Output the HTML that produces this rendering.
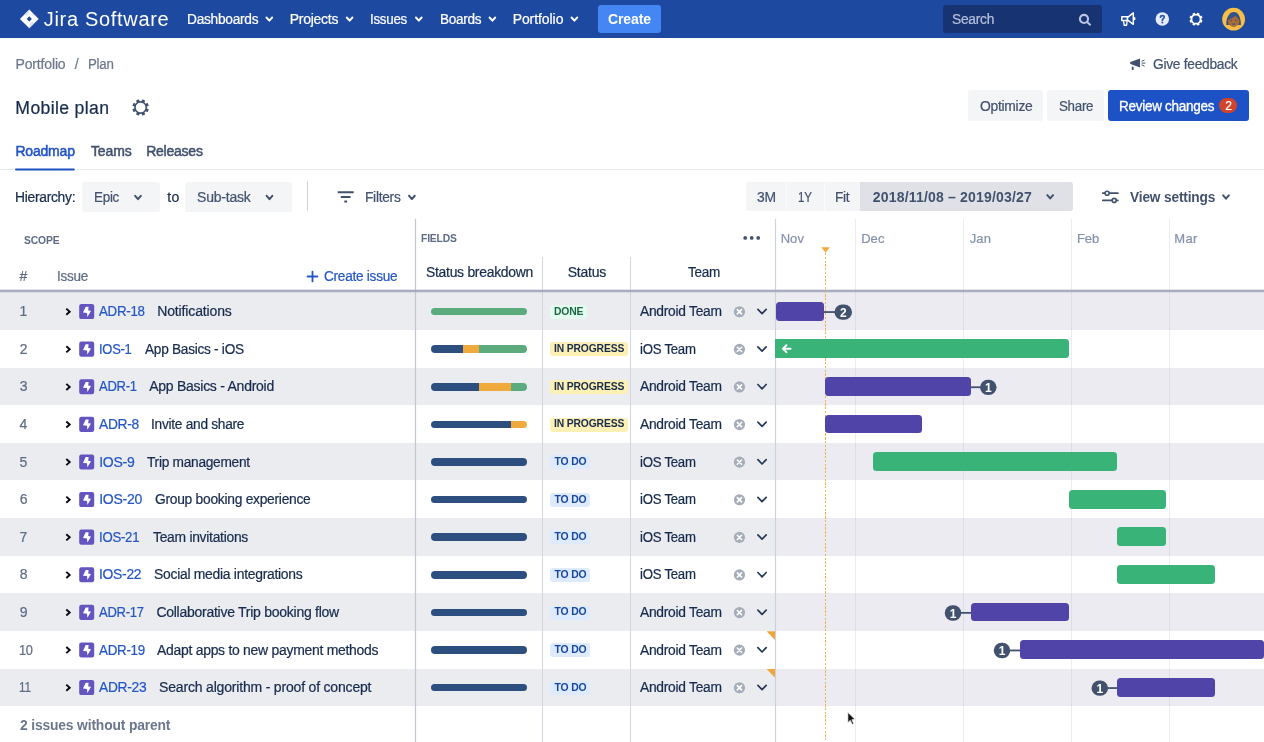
<!DOCTYPE html>
<html>
<head>
<meta charset="utf-8">
<title>Mobile plan - Portfolio for Jira</title>
<style>
*{box-sizing:border-box;margin:0;padding:0}
html,body{width:1264px;height:742px;overflow:hidden;background:#fff}
body{font-family:"Liberation Sans",sans-serif;font-size:14px;color:#172b4d;position:relative}
.b{position:absolute;display:block}
.t{position:absolute;white-space:nowrap;font-family:"Liberation Sans",sans-serif;-webkit-text-stroke:0.22px currentColor}
</style>
</head>
<body>
<div class="b" style="left:0.00px;top:0.00px;width:1264.00px;height:37.60px;background:#1d49a0;"></div>
<svg class="b" style="left:19px;top:9px;" width="22" height="21" viewBox="0 0 22 21"><g transform="translate(0.00 0.00)"><defs><linearGradient id="lg1" x1="0" y1="0" x2="1" y2="1"><stop offset="0" stop-color="#9fb2de"/><stop offset="1" stop-color="#fff"/></linearGradient><linearGradient id="lg2" x1="1" y1="1" x2="0" y2="0"><stop offset="0" stop-color="#9fb2de"/><stop offset="1" stop-color="#fff"/></linearGradient></defs><path d="M10.3 0.5 L19.7 9.9 L10.3 19.3 L0.9 9.9 Z" fill="#fff"/><path d="M5.6 5.2 L10.3 0.5 L10.3 5 L7.7 7.3 Z" fill="url(#lg1)" opacity=".85"/><path d="M15 14.6 L10.3 19.3 L10.3 14.8 L12.9 12.5 Z" fill="url(#lg2)" opacity=".85"/><path d="M10.3 7.3 L12.9 9.9 L10.3 12.5 L7.7 9.9 Z" fill="#1d49a0"/></g></svg>
<svg class="b" style="left:264px;top:15px;" width="11" height="8" viewBox="0 0 11 8"><g transform="translate(0.45 0.50)"><path d="M2 2 L4.85 5.2 L7.7 2" fill="none" stroke="#fff" stroke-width="1.9" stroke-linecap="round" stroke-linejoin="round"/></g></svg>
<svg class="b" style="left:344px;top:15px;" width="11" height="8" viewBox="0 0 11 8"><g transform="translate(0.75 0.50)"><path d="M2 2 L4.85 5.2 L7.7 2" fill="none" stroke="#fff" stroke-width="1.9" stroke-linecap="round" stroke-linejoin="round"/></g></svg>
<svg class="b" style="left:413px;top:15px;" width="11" height="8" viewBox="0 0 11 8"><g transform="translate(0.95 0.50)"><path d="M2 2 L4.85 5.2 L7.7 2" fill="none" stroke="#fff" stroke-width="1.9" stroke-linecap="round" stroke-linejoin="round"/></g></svg>
<svg class="b" style="left:487px;top:15px;" width="11" height="8" viewBox="0 0 11 8"><g transform="translate(0.55 0.50)"><path d="M2 2 L4.85 5.2 L7.7 2" fill="none" stroke="#fff" stroke-width="1.9" stroke-linecap="round" stroke-linejoin="round"/></g></svg>
<svg class="b" style="left:569px;top:15px;" width="11" height="8" viewBox="0 0 11 8"><g transform="translate(0.55 0.50)"><path d="M2 2 L4.85 5.2 L7.7 2" fill="none" stroke="#fff" stroke-width="1.9" stroke-linecap="round" stroke-linejoin="round"/></g></svg>
<div class="b" style="left:598.10px;top:4.80px;width:62.50px;height:28.60px;background:#4487f4;border-radius:3px"></div>
<div class="b" style="left:943.00px;top:4.80px;width:158.80px;height:28.40px;background:#173371;border-radius:3px"></div>
<svg class="b" style="left:1077px;top:12px;" width="17" height="17" viewBox="0 0 17 17"><g transform="translate(0.00 0.00)"><circle cx="7" cy="6.95" r="4.05" fill="none" stroke="#bcc5e0" stroke-width="2.1"/><path d="M10.1 10.1 L13.1 12.7" stroke="#bcc5e0" stroke-width="2" stroke-linecap="round"/></g></svg>
<svg class="b" style="left:1119px;top:10px;" width="19" height="19" viewBox="0 0 19 19"><g transform="translate(0.00 0.00)"><path d="M2.8 6.7 H8.4 V10.6 H2.8 Z" fill="none" stroke="#fff" stroke-width="1.5" stroke-linejoin="round"/><path d="M8.4 7.6 L14.3 2.9 V14.3 L8.4 9.9" fill="none" stroke="#fff" stroke-width="1.5" stroke-linejoin="round"/><path d="M4.5 11 L5.2 15.3 H7.6 L8 11" fill="none" stroke="#fff" stroke-width="1.4" stroke-linejoin="round"/><path d="M15.6 7.8 V9.6" stroke="#fff" stroke-width="1.5" stroke-linecap="round"/></g></svg>
<svg class="b" style="left:1154px;top:10px;" width="18" height="18" viewBox="0 0 18 18"><g transform="translate(0.00 0.60)"><circle cx="8.3" cy="8.5" r="6.75" fill="#e6ecfb"/><path d="M6.5 6.6 C6.5 4.5 10.2 4.5 10.2 6.6 C10.2 8 8.35 8 8.35 9.6" fill="none" stroke="#2a56b4" stroke-width="1.7" stroke-linecap="round"/><circle cx="8.35" cy="11.9" r="1.05" fill="#2a56b4"/></g></svg>
<svg class="b" style="left:1187px;top:10px;" width="18" height="18" viewBox="0 0 18 18"><g transform="translate(0.45 0.60)"><rect x="7.25" y="2.00" width="2.60" height="1.90" rx="0.5" fill="#fff" transform="rotate(22.5 8.55 8.55)"/><rect x="7.25" y="2.00" width="2.60" height="1.90" rx="0.5" fill="#fff" transform="rotate(67.5 8.55 8.55)"/><rect x="7.25" y="2.00" width="2.60" height="1.90" rx="0.5" fill="#fff" transform="rotate(112.5 8.55 8.55)"/><rect x="7.25" y="2.00" width="2.60" height="1.90" rx="0.5" fill="#fff" transform="rotate(157.5 8.55 8.55)"/><rect x="7.25" y="2.00" width="2.60" height="1.90" rx="0.5" fill="#fff" transform="rotate(202.5 8.55 8.55)"/><rect x="7.25" y="2.00" width="2.60" height="1.90" rx="0.5" fill="#fff" transform="rotate(247.5 8.55 8.55)"/><rect x="7.25" y="2.00" width="2.60" height="1.90" rx="0.5" fill="#fff" transform="rotate(292.5 8.55 8.55)"/><rect x="7.25" y="2.00" width="2.60" height="1.90" rx="0.5" fill="#fff" transform="rotate(337.5 8.55 8.55)"/><circle cx="8.55" cy="8.55" r="4.55" fill="none" stroke="#fff" stroke-width="1.80"/></g></svg>
<svg class="b" style="left:1222px;top:7px;" width="25" height="25" viewBox="0 0 25 25"><g transform="translate(0.00 0.70)"><defs><clipPath id="av"><circle cx="11.6" cy="11.5" r="11.4"/></clipPath></defs><circle cx="11.6" cy="11.5" r="11.4" fill="#f9be45"/><g clip-path="url(#av)"><path d="M4.3 17.2 C4.1 13.5 4.8 10.5 6.2 8.2 C7.4 5.6 9.4 4.2 11.8 4.2 C14.4 4.2 16.2 5.6 17.2 8.2 C18.4 10.8 19 13.6 18.9 17.2 Z" fill="#32528c"/><path d="M5.9 12.6 C7.2 11.6 10.4 10.6 13.6 8.4 C15 9.8 16.6 11.4 17.4 12.6 C17.6 14.4 17 16.2 15.8 17.4 C14.6 18.6 13 19.2 11.6 19.2 C10.2 19.2 8.6 18.6 7.4 17.4 C6.2 16.2 5.7 14.4 5.9 12.6 Z" fill="#ab6a33"/><circle cx="9.3" cy="12.9" r="0.75" fill="#32528c"/><circle cx="13.8" cy="12.9" r="0.75" fill="#32528c"/><path d="M10.1 15.9 H13.1 C13.1 17.6 10.1 17.6 10.1 15.9 Z" fill="#2457b5"/><ellipse cx="11.6" cy="14.3" rx="0.8" ry="0.6" fill="#c98250"/></g></g></svg>
<svg class="b" style="left:1129px;top:57px;" width="19" height="15" viewBox="0 0 19 15"><g transform="translate(0.00 0.20)"><path d="M1.5 4.8 L11 1.3 V10.2 L1.5 6.9 Q0.3 5.85 1.5 4.8 Z" fill="#42526e"/><path d="M2.8 9.4 L4.7 9.9 L4.5 12.7 L2.9 12.7 Z" fill="#42526e"/><path d="M13 4 L15.2 2.9 M13 5.9 H15.9 M13 7.8 L15.2 8.9" stroke="#42526e" stroke-width="1" stroke-linecap="round"/></g></svg>
<svg class="b" style="left:130px;top:97px;" width="21" height="21" viewBox="0 0 21 21"><g transform="translate(0.35 0.25)"><rect x="8.70" y="2.00" width="3.10" height="2.60" rx="0.5" fill="#42526e" transform="rotate(22.5 10.25 10.25)"/><rect x="8.70" y="2.00" width="3.10" height="2.60" rx="0.5" fill="#42526e" transform="rotate(67.5 10.25 10.25)"/><rect x="8.70" y="2.00" width="3.10" height="2.60" rx="0.5" fill="#42526e" transform="rotate(112.5 10.25 10.25)"/><rect x="8.70" y="2.00" width="3.10" height="2.60" rx="0.5" fill="#42526e" transform="rotate(157.5 10.25 10.25)"/><rect x="8.70" y="2.00" width="3.10" height="2.60" rx="0.5" fill="#42526e" transform="rotate(202.5 10.25 10.25)"/><rect x="8.70" y="2.00" width="3.10" height="2.60" rx="0.5" fill="#42526e" transform="rotate(247.5 10.25 10.25)"/><rect x="8.70" y="2.00" width="3.10" height="2.60" rx="0.5" fill="#42526e" transform="rotate(292.5 10.25 10.25)"/><rect x="8.70" y="2.00" width="3.10" height="2.60" rx="0.5" fill="#42526e" transform="rotate(337.5 10.25 10.25)"/><circle cx="10.25" cy="10.25" r="5.65" fill="none" stroke="#42526e" stroke-width="1.60"/></g></svg>
<div class="b" style="left:968.40px;top:90.30px;width:74.60px;height:30.30px;background:#f4f5f7;border-radius:3px"></div>
<div class="b" style="left:1047.00px;top:90.30px;width:56.80px;height:30.30px;background:#f4f5f7;border-radius:3px"></div>
<div class="b" style="left:1107.90px;top:90.30px;width:140.80px;height:30.30px;background:#1d51c6;border-radius:3px"></div>
<div class="b" style="left:1219.20px;top:97.90px;width:18.20px;height:15.20px;background:#d2432c;border-radius:7.6px"></div>
<div class="b" style="left:0.00px;top:169.00px;width:1264.00px;height:1.00px;background:#e5e7ec;"></div>
<svg class="b" style="left:14px;top:167px;" width="64" height="6" viewBox="0 0 64 6"><g transform="translate(0.00 0.00)"><rect x="-1" y="1.2" width="64" height="2.6" fill="#fff"/><rect x="1.0" y="1.4" width="59.8" height="2.05" rx="1" fill="#1f50c2"/></g></svg>
<div class="b" style="left:82.10px;top:181.90px;width:78.20px;height:29.90px;background:#f4f5f7;border-radius:3px"></div>
<div class="b" style="left:185.30px;top:181.90px;width:106.70px;height:29.90px;background:#f4f5f7;border-radius:3px"></div>
<svg class="b" style="left:133px;top:193px;" width="10" height="9" viewBox="0 0 10 9"><g transform="translate(0.15 0.85)"><path d="M2 2 L4.85 5.3 L7.7 2" fill="none" stroke="#42526e" stroke-width="2.0" stroke-linecap="round" stroke-linejoin="round"/></g></svg>
<svg class="b" style="left:264px;top:193px;" width="11" height="9" viewBox="0 0 11 9"><g transform="translate(0.65 0.85)"><path d="M2 2 L4.85 5.3 L7.7 2" fill="none" stroke="#42526e" stroke-width="2.0" stroke-linecap="round" stroke-linejoin="round"/></g></svg>
<div class="b" style="left:307.00px;top:181.00px;width:1.20px;height:30.00px;background:#cfd3dc;"></div>
<svg class="b" style="left:336px;top:188px;" width="21" height="18" viewBox="0 0 21 18"><g transform="translate(0.00 0.00)"><path d="M1.7 4.2 H17.7 M4.8 9 H14.6 M8.3 13.6 H11.1" stroke="#42526e" stroke-width="2" stroke-linecap="butt"/></g></svg>
<svg class="b" style="left:407px;top:193px;" width="10" height="9" viewBox="0 0 10 9"><g transform="translate(0.05 0.75)"><path d="M2 2 L4.85 5.3 L7.7 2" fill="none" stroke="#42526e" stroke-width="2.0" stroke-linecap="round" stroke-linejoin="round"/></g></svg>
<div class="b" style="left:746.00px;top:181.60px;width:115.00px;height:29.80px;background:#f4f5f7;border-radius:3px 0 0 3px"></div>
<div class="b" style="left:786.40px;top:181.60px;width:0.80px;height:29.80px;background:#fafbfc;"></div>
<div class="b" style="left:823.80px;top:181.60px;width:0.80px;height:29.80px;background:#fafbfc;"></div>
<div class="b" style="left:860.40px;top:181.60px;width:212.20px;height:29.80px;background:#dfe1e6;border-radius:0 3px 3px 0"></div>
<svg class="b" style="left:1045px;top:193px;" width="11" height="8" viewBox="0 0 11 8"><g transform="translate(0.35 0.15)"><path d="M2 2 L4.85 5.3 L7.7 2" fill="none" stroke="#42526e" stroke-width="2.0" stroke-linecap="round" stroke-linejoin="round"/></g></svg>
<svg class="b" style="left:1100px;top:188px;" width="23" height="18" viewBox="0 0 23 18"><g transform="translate(0.00 0.00)"><path d="M2.8 5.2 H17.9 M2.8 12.4 H17.9" stroke="#42526e" stroke-width="1.7" stroke-linecap="round"/><circle cx="7.1" cy="5.2" r="2.0" fill="#fff" stroke="#42526e" stroke-width="1.6"/><circle cx="14.2" cy="12.4" r="2.0" fill="#fff" stroke="#42526e" stroke-width="1.6"/></g></svg>
<svg class="b" style="left:1221px;top:193px;" width="10" height="8" viewBox="0 0 10 8"><g transform="translate(0.15 0.35)"><path d="M2 2 L4.85 5.3 L7.7 2" fill="none" stroke="#42526e" stroke-width="2.0" stroke-linecap="round" stroke-linejoin="round"/></g></svg>
<div class="b" style="left:0.00px;top:290.60px;width:1264.00px;height:39.50px;background:#ebecf0;"></div>
<div class="b" style="left:776.00px;top:290.60px;width:488.00px;height:39.50px;background:#ecebf1;"></div>
<div class="b" style="left:0.00px;top:367.70px;width:1264.00px;height:37.60px;background:#ebecf0;"></div>
<div class="b" style="left:776.00px;top:367.70px;width:488.00px;height:37.60px;background:#ecebf1;"></div>
<div class="b" style="left:0.00px;top:442.90px;width:1264.00px;height:37.60px;background:#ebecf0;"></div>
<div class="b" style="left:776.00px;top:442.90px;width:488.00px;height:37.60px;background:#ecebf1;"></div>
<div class="b" style="left:0.00px;top:518.10px;width:1264.00px;height:37.60px;background:#ebecf0;"></div>
<div class="b" style="left:776.00px;top:518.10px;width:488.00px;height:37.60px;background:#ecebf1;"></div>
<div class="b" style="left:0.00px;top:593.30px;width:1264.00px;height:37.60px;background:#ebecf0;"></div>
<div class="b" style="left:776.00px;top:593.30px;width:488.00px;height:37.60px;background:#ecebf1;"></div>
<div class="b" style="left:0.00px;top:668.50px;width:1264.00px;height:37.60px;background:#ebecf0;"></div>
<div class="b" style="left:776.00px;top:668.50px;width:488.00px;height:37.60px;background:#ecebf1;"></div>
<div class="b" style="left:854.90px;top:219.00px;width:1.00px;height:523.00px;background:rgba(175,180,195,.24);"></div>
<div class="b" style="left:962.80px;top:219.00px;width:1.00px;height:523.00px;background:rgba(175,180,195,.24);"></div>
<div class="b" style="left:1070.90px;top:219.00px;width:1.00px;height:523.00px;background:rgba(175,180,195,.24);"></div>
<div class="b" style="left:1168.80px;top:219.00px;width:1.00px;height:523.00px;background:rgba(175,180,195,.24);"></div>
<div class="b" style="left:414.80px;top:219.00px;width:1.20px;height:523.00px;background:#c2c7d1;box-shadow:0 0 1.5px rgba(193,199,208,.7)"></div>
<div class="b" style="left:541.70px;top:256.50px;width:1.10px;height:486.00px;background:#d3d6de;"></div>
<div class="b" style="left:630.00px;top:256.50px;width:1.10px;height:486.00px;background:#d3d6de;"></div>
<div class="b" style="left:774.80px;top:219.00px;width:1.20px;height:523.00px;background:#cdd1da;box-shadow:0 0 1px rgba(193,199,208,.5)"></div>
<div class="b" style="left:0.00px;top:288.70px;width:1264.00px;height:4.00px;background:linear-gradient(to bottom,rgba(163,169,186,0) 0%,rgba(163,169,186,.5) 22%,rgba(163,169,186,1) 38%,rgba(163,169,186,1) 58%,rgba(163,169,186,.5) 76%,rgba(163,169,186,0) 100%);"></div>
<svg class="b" style="left:742px;top:234px;" width="21" height="8" viewBox="0 0 21 8"><g transform="translate(0.00 0.50)"><circle cx="3.2" cy="3.4" r="1.9" fill="#42526e"/><circle cx="9.7" cy="3.4" r="1.9" fill="#42526e"/><circle cx="16.2" cy="3.4" r="1.9" fill="#42526e"/></g></svg>
<svg class="b" style="left:306px;top:270px;" width="14" height="14" viewBox="0 0 14 14"><g transform="translate(0.00 0.00)"><path d="M6.5 1.6 V11.4 M1.6 6.5 H11.4" stroke="#2456c6" stroke-width="1.8" stroke-linecap="round"/></g></svg>
<svg class="b" style="left:821px;top:247px;" width="10" height="7" viewBox="0 0 10 7"><g transform="translate(0.20 0.00)"><path d="M0.2 0.3 H8.6 L4.4 5.8 Z" fill="#f0a93b"/></g></svg>
<div class="b" style="left:825px;top:252.6px;width:1px;height:496px;background:repeating-linear-gradient(to bottom,#f1b054 0,#f1b054 2.3px,transparent 2.3px,transparent 3.76px)"></div>
<svg class="b" style="left:63px;top:305px;" width="12" height="13" viewBox="0 0 12 13"><g transform="translate(0.00 0.20)"><path d="M3.3 3.45 L6.7 6.5 L3.3 9.55" fill="none" stroke="#0a0a0f" stroke-width="1.9" stroke-linejoin="miter"/></g></svg>
<svg class="b" style="left:79px;top:304px;" width="16" height="16" viewBox="0 0 16 16"><g transform="translate(0.20 0.00)"><rect x="0" y="0" width="15" height="15.1" rx="2.2" fill="#6354bf"/><path d="M6.5 2.7 L9.4 2.7 L9 6.4 L11.8 6.8 L8.2 12.9 L7.8 8.9 L3.8 8.5 Z" fill="#fff"/></g></svg>
<div class="b" style="left:431.10px;top:307.80px;width:95.70px;height:7.6px;border-radius:4px;overflow:hidden;display:flex"><i style="display:block;height:100%;width:100.000%;background:#5bab7d"></i></div>
<div class="b" style="left:550.40px;top:304.70px;width:36.40px;height:14.00px;background:#e3fcef;border-radius:3px"></div>
<svg class="b" style="left:733px;top:305px;" width="13" height="13" viewBox="0 0 13 13"><g transform="translate(0.60 0.40)"><circle cx="5.85" cy="6.35" r="5.6" fill="#a5adba"/><path d="M3.75 4.25 L7.95 8.45 M7.95 4.25 L3.75 8.45" stroke="#fff" stroke-width="1.6" stroke-linecap="round"/></g></svg>
<svg class="b" style="left:755px;top:307px;" width="15" height="11" viewBox="0 0 15 11"><g transform="translate(0.00 0.30)"><path d="M2.9 2 L7.05 6.3 L11.2 2" fill="none" stroke="#253858" stroke-width="1.7" stroke-linecap="round" stroke-linejoin="round"/></g></svg>
<svg class="b" style="left:823px;top:311px;" width="20" height="2" viewBox="0 0 20 2"><g transform="translate(0.30 0.15)"><rect x="0" y="0" width="18.95" height="1.8" fill="#42526e"/></g></svg>
<div class="b" style="left:775.70px;top:301.80px;width:48.60px;height:18.80px;background:#5144a8;border-radius:3.5px"></div>
<svg class="b" style="left:833px;top:303px;" width="21" height="18" viewBox="0 0 21 18"><g transform="translate(0.50 0.45)"><rect x="1" y="1" width="17.50" height="15.4" rx="7.7" fill="#42526e"/></g></svg>
<svg class="b" style="left:63px;top:342px;" width="12" height="13" viewBox="0 0 12 13"><g transform="translate(0.00 0.80)"><path d="M3.3 3.45 L6.7 6.5 L3.3 9.55" fill="none" stroke="#0a0a0f" stroke-width="1.9" stroke-linejoin="miter"/></g></svg>
<svg class="b" style="left:79px;top:341px;" width="16" height="16" viewBox="0 0 16 16"><g transform="translate(0.20 0.60)"><rect x="0" y="0" width="15" height="15.1" rx="2.2" fill="#6354bf"/><path d="M6.5 2.7 L9.4 2.7 L9 6.4 L11.8 6.8 L8.2 12.9 L7.8 8.9 L3.8 8.5 Z" fill="#fff"/></g></svg>
<div class="b" style="left:431.10px;top:345.40px;width:95.70px;height:7.6px;border-radius:4px;overflow:hidden;display:flex"><i style="display:block;height:100%;width:33.333%;background:#2d4f80"></i><i style="display:block;height:100%;width:16.667%;background:#f0aa3c"></i><i style="display:block;height:100%;width:50.000%;background:#5bab7d"></i></div>
<div class="b" style="left:550.00px;top:342.30px;width:77.90px;height:14.00px;background:#fdf0b4;border-radius:3px"></div>
<svg class="b" style="left:733px;top:343px;" width="13" height="13" viewBox="0 0 13 13"><g transform="translate(0.60 0.00)"><circle cx="5.85" cy="6.35" r="5.6" fill="#a5adba"/><path d="M3.75 4.25 L7.95 8.45 M7.95 4.25 L3.75 8.45" stroke="#fff" stroke-width="1.6" stroke-linecap="round"/></g></svg>
<svg class="b" style="left:755px;top:344px;" width="15" height="11" viewBox="0 0 15 11"><g transform="translate(0.00 0.90)"><path d="M2.9 2 L7.05 6.3 L11.2 2" fill="none" stroke="#253858" stroke-width="1.7" stroke-linecap="round" stroke-linejoin="round"/></g></svg>
<div class="b" style="left:775.40px;top:339.40px;width:293.60px;height:18.80px;background:#39b377;border-radius:0 3.5px 3.5px 0"></div>
<svg class="b" style="left:63px;top:380px;" width="12" height="13" viewBox="0 0 12 13"><g transform="translate(0.00 0.40)"><path d="M3.3 3.45 L6.7 6.5 L3.3 9.55" fill="none" stroke="#0a0a0f" stroke-width="1.9" stroke-linejoin="miter"/></g></svg>
<svg class="b" style="left:79px;top:379px;" width="16" height="16" viewBox="0 0 16 16"><g transform="translate(0.20 0.20)"><rect x="0" y="0" width="15" height="15.1" rx="2.2" fill="#6354bf"/><path d="M6.5 2.7 L9.4 2.7 L9 6.4 L11.8 6.8 L8.2 12.9 L7.8 8.9 L3.8 8.5 Z" fill="#fff"/></g></svg>
<div class="b" style="left:431.10px;top:383.00px;width:95.70px;height:7.6px;border-radius:4px;overflow:hidden;display:flex"><i style="display:block;height:100%;width:50.000%;background:#2d4f80"></i><i style="display:block;height:100%;width:33.333%;background:#f0aa3c"></i><i style="display:block;height:100%;width:16.667%;background:#5bab7d"></i></div>
<div class="b" style="left:550.00px;top:379.90px;width:77.90px;height:14.00px;background:#fdf0b4;border-radius:3px"></div>
<svg class="b" style="left:733px;top:380px;" width="13" height="13" viewBox="0 0 13 13"><g transform="translate(0.60 0.60)"><circle cx="5.85" cy="6.35" r="5.6" fill="#a5adba"/><path d="M3.75 4.25 L7.95 8.45 M7.95 4.25 L3.75 8.45" stroke="#fff" stroke-width="1.6" stroke-linecap="round"/></g></svg>
<svg class="b" style="left:755px;top:382px;" width="15" height="11" viewBox="0 0 15 11"><g transform="translate(0.00 0.50)"><path d="M2.9 2 L7.05 6.3 L11.2 2" fill="none" stroke="#253858" stroke-width="1.7" stroke-linecap="round" stroke-linejoin="round"/></g></svg>
<svg class="b" style="left:970px;top:386px;" width="18" height="3" viewBox="0 0 18 3"><g transform="translate(0.10 0.35)"><rect x="0" y="0" width="17.20" height="1.8" fill="#42526e"/></g></svg>
<div class="b" style="left:824.60px;top:377.00px;width:146.50px;height:18.80px;background:#5144a8;border-radius:3.5px"></div>
<svg class="b" style="left:979px;top:378px;" width="19" height="19" viewBox="0 0 19 19"><g transform="translate(0.05 0.65)"><rect x="1" y="1" width="16.50" height="15.4" rx="7.7" fill="#42526e"/></g></svg>
<svg class="b" style="left:63px;top:418px;" width="12" height="13" viewBox="0 0 12 13"><g transform="translate(0.00 0.00)"><path d="M3.3 3.45 L6.7 6.5 L3.3 9.55" fill="none" stroke="#0a0a0f" stroke-width="1.9" stroke-linejoin="miter"/></g></svg>
<svg class="b" style="left:79px;top:416px;" width="16" height="17" viewBox="0 0 16 17"><g transform="translate(0.20 0.80)"><rect x="0" y="0" width="15" height="15.1" rx="2.2" fill="#6354bf"/><path d="M6.5 2.7 L9.4 2.7 L9 6.4 L11.8 6.8 L8.2 12.9 L7.8 8.9 L3.8 8.5 Z" fill="#fff"/></g></svg>
<div class="b" style="left:431.10px;top:420.60px;width:95.70px;height:7.6px;border-radius:4px;overflow:hidden;display:flex"><i style="display:block;height:100%;width:83.333%;background:#2d4f80"></i><i style="display:block;height:100%;width:16.667%;background:#f0aa3c"></i></div>
<div class="b" style="left:550.00px;top:417.50px;width:77.90px;height:14.00px;background:#fdf0b4;border-radius:3px"></div>
<svg class="b" style="left:733px;top:418px;" width="13" height="13" viewBox="0 0 13 13"><g transform="translate(0.60 0.20)"><circle cx="5.85" cy="6.35" r="5.6" fill="#a5adba"/><path d="M3.75 4.25 L7.95 8.45 M7.95 4.25 L3.75 8.45" stroke="#fff" stroke-width="1.6" stroke-linecap="round"/></g></svg>
<svg class="b" style="left:755px;top:420px;" width="15" height="11" viewBox="0 0 15 11"><g transform="translate(0.00 0.10)"><path d="M2.9 2 L7.05 6.3 L11.2 2" fill="none" stroke="#253858" stroke-width="1.7" stroke-linecap="round" stroke-linejoin="round"/></g></svg>
<div class="b" style="left:824.60px;top:414.60px;width:97.60px;height:18.80px;background:#5144a8;border-radius:3.5px"></div>
<svg class="b" style="left:63px;top:455px;" width="12" height="13" viewBox="0 0 12 13"><g transform="translate(0.00 0.60)"><path d="M3.3 3.45 L6.7 6.5 L3.3 9.55" fill="none" stroke="#0a0a0f" stroke-width="1.9" stroke-linejoin="miter"/></g></svg>
<svg class="b" style="left:79px;top:454px;" width="16" height="16" viewBox="0 0 16 16"><g transform="translate(0.20 0.40)"><rect x="0" y="0" width="15" height="15.1" rx="2.2" fill="#6354bf"/><path d="M6.5 2.7 L9.4 2.7 L9 6.4 L11.8 6.8 L8.2 12.9 L7.8 8.9 L3.8 8.5 Z" fill="#fff"/></g></svg>
<div class="b" style="left:431.10px;top:458.20px;width:95.70px;height:7.6px;border-radius:4px;overflow:hidden;display:flex"><i style="display:block;height:100%;width:100.000%;background:#2d4f80"></i></div>
<div class="b" style="left:550.00px;top:455.10px;width:39.50px;height:14.00px;background:#deebff;border-radius:3px"></div>
<svg class="b" style="left:733px;top:455px;" width="13" height="13" viewBox="0 0 13 13"><g transform="translate(0.60 0.80)"><circle cx="5.85" cy="6.35" r="5.6" fill="#a5adba"/><path d="M3.75 4.25 L7.95 8.45 M7.95 4.25 L3.75 8.45" stroke="#fff" stroke-width="1.6" stroke-linecap="round"/></g></svg>
<svg class="b" style="left:755px;top:457px;" width="15" height="11" viewBox="0 0 15 11"><g transform="translate(0.00 0.70)"><path d="M2.9 2 L7.05 6.3 L11.2 2" fill="none" stroke="#253858" stroke-width="1.7" stroke-linecap="round" stroke-linejoin="round"/></g></svg>
<div class="b" style="left:873.40px;top:452.20px;width:243.80px;height:18.80px;background:#39b377;border-radius:3.5px"></div>
<svg class="b" style="left:63px;top:493px;" width="12" height="13" viewBox="0 0 12 13"><g transform="translate(0.00 0.20)"><path d="M3.3 3.45 L6.7 6.5 L3.3 9.55" fill="none" stroke="#0a0a0f" stroke-width="1.9" stroke-linejoin="miter"/></g></svg>
<svg class="b" style="left:79px;top:492px;" width="16" height="16" viewBox="0 0 16 16"><g transform="translate(0.20 0.00)"><rect x="0" y="0" width="15" height="15.1" rx="2.2" fill="#6354bf"/><path d="M6.5 2.7 L9.4 2.7 L9 6.4 L11.8 6.8 L8.2 12.9 L7.8 8.9 L3.8 8.5 Z" fill="#fff"/></g></svg>
<div class="b" style="left:431.10px;top:495.80px;width:95.70px;height:7.6px;border-radius:4px;overflow:hidden;display:flex"><i style="display:block;height:100%;width:100.000%;background:#2d4f80"></i></div>
<div class="b" style="left:550.00px;top:492.70px;width:39.50px;height:14.00px;background:#deebff;border-radius:3px"></div>
<svg class="b" style="left:733px;top:493px;" width="13" height="13" viewBox="0 0 13 13"><g transform="translate(0.60 0.40)"><circle cx="5.85" cy="6.35" r="5.6" fill="#a5adba"/><path d="M3.75 4.25 L7.95 8.45 M7.95 4.25 L3.75 8.45" stroke="#fff" stroke-width="1.6" stroke-linecap="round"/></g></svg>
<svg class="b" style="left:755px;top:495px;" width="15" height="11" viewBox="0 0 15 11"><g transform="translate(0.00 0.30)"><path d="M2.9 2 L7.05 6.3 L11.2 2" fill="none" stroke="#253858" stroke-width="1.7" stroke-linecap="round" stroke-linejoin="round"/></g></svg>
<div class="b" style="left:1069.10px;top:489.80px;width:96.90px;height:18.80px;background:#39b377;border-radius:3.5px"></div>
<svg class="b" style="left:63px;top:530px;" width="12" height="13" viewBox="0 0 12 13"><g transform="translate(0.00 0.80)"><path d="M3.3 3.45 L6.7 6.5 L3.3 9.55" fill="none" stroke="#0a0a0f" stroke-width="1.9" stroke-linejoin="miter"/></g></svg>
<svg class="b" style="left:79px;top:529px;" width="16" height="16" viewBox="0 0 16 16"><g transform="translate(0.20 0.60)"><rect x="0" y="0" width="15" height="15.1" rx="2.2" fill="#6354bf"/><path d="M6.5 2.7 L9.4 2.7 L9 6.4 L11.8 6.8 L8.2 12.9 L7.8 8.9 L3.8 8.5 Z" fill="#fff"/></g></svg>
<div class="b" style="left:431.10px;top:533.40px;width:95.70px;height:7.6px;border-radius:4px;overflow:hidden;display:flex"><i style="display:block;height:100%;width:100.000%;background:#2d4f80"></i></div>
<div class="b" style="left:550.00px;top:530.30px;width:39.50px;height:14.00px;background:#deebff;border-radius:3px"></div>
<svg class="b" style="left:733px;top:531px;" width="13" height="13" viewBox="0 0 13 13"><g transform="translate(0.60 0.00)"><circle cx="5.85" cy="6.35" r="5.6" fill="#a5adba"/><path d="M3.75 4.25 L7.95 8.45 M7.95 4.25 L3.75 8.45" stroke="#fff" stroke-width="1.6" stroke-linecap="round"/></g></svg>
<svg class="b" style="left:755px;top:532px;" width="15" height="11" viewBox="0 0 15 11"><g transform="translate(0.00 0.90)"><path d="M2.9 2 L7.05 6.3 L11.2 2" fill="none" stroke="#253858" stroke-width="1.7" stroke-linecap="round" stroke-linejoin="round"/></g></svg>
<div class="b" style="left:1117.20px;top:527.40px;width:48.80px;height:18.80px;background:#39b377;border-radius:3.5px"></div>
<svg class="b" style="left:63px;top:568px;" width="12" height="13" viewBox="0 0 12 13"><g transform="translate(0.00 0.40)"><path d="M3.3 3.45 L6.7 6.5 L3.3 9.55" fill="none" stroke="#0a0a0f" stroke-width="1.9" stroke-linejoin="miter"/></g></svg>
<svg class="b" style="left:79px;top:567px;" width="16" height="16" viewBox="0 0 16 16"><g transform="translate(0.20 0.20)"><rect x="0" y="0" width="15" height="15.1" rx="2.2" fill="#6354bf"/><path d="M6.5 2.7 L9.4 2.7 L9 6.4 L11.8 6.8 L8.2 12.9 L7.8 8.9 L3.8 8.5 Z" fill="#fff"/></g></svg>
<div class="b" style="left:431.10px;top:571.00px;width:95.70px;height:7.6px;border-radius:4px;overflow:hidden;display:flex"><i style="display:block;height:100%;width:100.000%;background:#2d4f80"></i></div>
<div class="b" style="left:550.00px;top:567.90px;width:39.50px;height:14.00px;background:#deebff;border-radius:3px"></div>
<svg class="b" style="left:733px;top:568px;" width="13" height="13" viewBox="0 0 13 13"><g transform="translate(0.60 0.60)"><circle cx="5.85" cy="6.35" r="5.6" fill="#a5adba"/><path d="M3.75 4.25 L7.95 8.45 M7.95 4.25 L3.75 8.45" stroke="#fff" stroke-width="1.6" stroke-linecap="round"/></g></svg>
<svg class="b" style="left:755px;top:570px;" width="15" height="11" viewBox="0 0 15 11"><g transform="translate(0.00 0.50)"><path d="M2.9 2 L7.05 6.3 L11.2 2" fill="none" stroke="#253858" stroke-width="1.7" stroke-linecap="round" stroke-linejoin="round"/></g></svg>
<div class="b" style="left:1117.20px;top:565.00px;width:97.60px;height:18.80px;background:#39b377;border-radius:3.5px"></div>
<svg class="b" style="left:63px;top:606px;" width="12" height="13" viewBox="0 0 12 13"><g transform="translate(0.00 0.00)"><path d="M3.3 3.45 L6.7 6.5 L3.3 9.55" fill="none" stroke="#0a0a0f" stroke-width="1.9" stroke-linejoin="miter"/></g></svg>
<svg class="b" style="left:79px;top:604px;" width="16" height="17" viewBox="0 0 16 17"><g transform="translate(0.20 0.80)"><rect x="0" y="0" width="15" height="15.1" rx="2.2" fill="#6354bf"/><path d="M6.5 2.7 L9.4 2.7 L9 6.4 L11.8 6.8 L8.2 12.9 L7.8 8.9 L3.8 8.5 Z" fill="#fff"/></g></svg>
<div class="b" style="left:431.10px;top:608.60px;width:95.70px;height:7.6px;border-radius:4px;overflow:hidden;display:flex"><i style="display:block;height:100%;width:100.000%;background:#2d4f80"></i></div>
<div class="b" style="left:550.00px;top:605.50px;width:39.50px;height:14.00px;background:#deebff;border-radius:3px"></div>
<svg class="b" style="left:733px;top:606px;" width="13" height="13" viewBox="0 0 13 13"><g transform="translate(0.60 0.20)"><circle cx="5.85" cy="6.35" r="5.6" fill="#a5adba"/><path d="M3.75 4.25 L7.95 8.45 M7.95 4.25 L3.75 8.45" stroke="#fff" stroke-width="1.6" stroke-linecap="round"/></g></svg>
<svg class="b" style="left:755px;top:608px;" width="15" height="11" viewBox="0 0 15 11"><g transform="translate(0.00 0.10)"><path d="M2.9 2 L7.05 6.3 L11.2 2" fill="none" stroke="#253858" stroke-width="1.7" stroke-linecap="round" stroke-linejoin="round"/></g></svg>
<svg class="b" style="left:953px;top:611px;" width="20" height="3" viewBox="0 0 20 3"><g transform="translate(0.00 0.95)"><rect x="0" y="0" width="19.10" height="1.8" fill="#42526e"/></g></svg>
<div class="b" style="left:971.10px;top:602.60px;width:97.80px;height:18.80px;background:#5144a8;border-radius:3.5px"></div>
<svg class="b" style="left:943px;top:604px;" width="20" height="18" viewBox="0 0 20 18"><g transform="translate(0.75 0.25)"><rect x="1" y="1" width="16.50" height="15.4" rx="7.7" fill="#42526e"/></g></svg>
<svg class="b" style="left:63px;top:643px;" width="12" height="13" viewBox="0 0 12 13"><g transform="translate(0.00 0.60)"><path d="M3.3 3.45 L6.7 6.5 L3.3 9.55" fill="none" stroke="#0a0a0f" stroke-width="1.9" stroke-linejoin="miter"/></g></svg>
<svg class="b" style="left:79px;top:642px;" width="16" height="16" viewBox="0 0 16 16"><g transform="translate(0.20 0.40)"><rect x="0" y="0" width="15" height="15.1" rx="2.2" fill="#6354bf"/><path d="M6.5 2.7 L9.4 2.7 L9 6.4 L11.8 6.8 L8.2 12.9 L7.8 8.9 L3.8 8.5 Z" fill="#fff"/></g></svg>
<div class="b" style="left:431.10px;top:646.20px;width:95.70px;height:7.6px;border-radius:4px;overflow:hidden;display:flex"><i style="display:block;height:100%;width:100.000%;background:#2d4f80"></i></div>
<div class="b" style="left:550.00px;top:643.10px;width:39.50px;height:14.00px;background:#deebff;border-radius:3px"></div>
<svg class="b" style="left:733px;top:643px;" width="13" height="13" viewBox="0 0 13 13"><g transform="translate(0.60 0.80)"><circle cx="5.85" cy="6.35" r="5.6" fill="#a5adba"/><path d="M3.75 4.25 L7.95 8.45 M7.95 4.25 L3.75 8.45" stroke="#fff" stroke-width="1.6" stroke-linecap="round"/></g></svg>
<svg class="b" style="left:755px;top:645px;" width="15" height="11" viewBox="0 0 15 11"><g transform="translate(0.00 0.70)"><path d="M2.9 2 L7.05 6.3 L11.2 2" fill="none" stroke="#253858" stroke-width="1.7" stroke-linecap="round" stroke-linejoin="round"/></g></svg>
<svg class="b" style="left:1002px;top:649px;" width="20" height="3" viewBox="0 0 20 3"><g transform="translate(0.00 0.55)"><rect x="0" y="0" width="19.20" height="1.8" fill="#42526e"/></g></svg>
<div class="b" style="left:1020.20px;top:640.20px;width:243.40px;height:18.80px;background:#5144a8;border-radius:3.5px"></div>
<svg class="b" style="left:992px;top:641px;" width="20" height="19" viewBox="0 0 20 19"><g transform="translate(0.75 0.85)"><rect x="1" y="1" width="16.50" height="15.4" rx="7.7" fill="#42526e"/></g></svg>
<svg class="b" style="left:63px;top:681px;" width="12" height="13" viewBox="0 0 12 13"><g transform="translate(0.00 0.20)"><path d="M3.3 3.45 L6.7 6.5 L3.3 9.55" fill="none" stroke="#0a0a0f" stroke-width="1.9" stroke-linejoin="miter"/></g></svg>
<svg class="b" style="left:79px;top:680px;" width="16" height="16" viewBox="0 0 16 16"><g transform="translate(0.20 0.00)"><rect x="0" y="0" width="15" height="15.1" rx="2.2" fill="#6354bf"/><path d="M6.5 2.7 L9.4 2.7 L9 6.4 L11.8 6.8 L8.2 12.9 L7.8 8.9 L3.8 8.5 Z" fill="#fff"/></g></svg>
<div class="b" style="left:431.10px;top:683.80px;width:95.70px;height:7.6px;border-radius:4px;overflow:hidden;display:flex"><i style="display:block;height:100%;width:100.000%;background:#2d4f80"></i></div>
<div class="b" style="left:550.00px;top:680.70px;width:39.50px;height:14.00px;background:#deebff;border-radius:3px"></div>
<svg class="b" style="left:733px;top:681px;" width="13" height="13" viewBox="0 0 13 13"><g transform="translate(0.60 0.40)"><circle cx="5.85" cy="6.35" r="5.6" fill="#a5adba"/><path d="M3.75 4.25 L7.95 8.45 M7.95 4.25 L3.75 8.45" stroke="#fff" stroke-width="1.6" stroke-linecap="round"/></g></svg>
<svg class="b" style="left:755px;top:683px;" width="15" height="11" viewBox="0 0 15 11"><g transform="translate(0.00 0.30)"><path d="M2.9 2 L7.05 6.3 L11.2 2" fill="none" stroke="#253858" stroke-width="1.7" stroke-linecap="round" stroke-linejoin="round"/></g></svg>
<svg class="b" style="left:1099px;top:687px;" width="20" height="2" viewBox="0 0 20 2"><g transform="translate(0.80 0.15)"><rect x="0" y="0" width="18.40" height="1.8" fill="#42526e"/></g></svg>
<div class="b" style="left:1117.20px;top:677.80px;width:97.80px;height:18.80px;background:#5144a8;border-radius:3.5px"></div>
<svg class="b" style="left:1090px;top:679px;" width="20" height="18" viewBox="0 0 20 18"><g transform="translate(0.55 0.45)"><rect x="1" y="1" width="16.50" height="15.4" rx="7.7" fill="#42526e"/></g></svg>
<svg class="b" style="left:781px;top:343px;" width="13" height="12" viewBox="0 0 13 12"><g transform="translate(0.00 0.30)"><path d="M9.6 5.4 H2.6 M5.4 2 L2 5.4 L5.4 8.8" fill="none" stroke="#fff" stroke-width="2" stroke-linecap="round" stroke-linejoin="round"/></g></svg>
<svg class="b" style="left:766px;top:631px;" width="10" height="9" viewBox="0 0 10 9"><g transform="translate(0.60 0.30)"><path d="M0 0 H8.4 V8.6 Z" fill="#eea53c"/></g></svg>
<svg class="b" style="left:766px;top:668px;" width="10" height="10" viewBox="0 0 10 10"><g transform="translate(0.60 0.90)"><path d="M0 0 H8.4 V8.6 Z" fill="#eea53c"/></g></svg>
<svg class="b" style="left:845.80px;top:710.90px;" width="11" height="15" viewBox="0 0 10 13.9"><path d="M1.6 1.2 V10.8 L3.9 8.7 L5.6 12.4 L7.1 11.7 L5.4 8.1 L8.4 7.9 Z" fill="#111" stroke="#fff" stroke-width="0.7"/></svg>
<div id="txt" style="position:absolute;left:0;top:0;width:1264px;height:742px;will-change:transform">
<div class="t" style="left:43.80px;top:9.07px;font-size:20px;line-height:20px;color:#fff;letter-spacing:0.685px;-webkit-text-stroke:0;">Jira Software</div>
<div class="t" style="left:186.65px;top:12.45px;font-size:14px;line-height:14px;color:#fff;letter-spacing:-0.280px;transform:scaleX(0.9797);transform-origin:0 50%;">Dashboards</div>
<div class="t" style="left:289.65px;top:12.45px;font-size:14px;line-height:14px;color:#fff;letter-spacing:-0.254px;">Projects</div>
<div class="t" style="left:370.15px;top:12.45px;font-size:14px;line-height:14px;color:#fff;letter-spacing:-0.280px;transform:scaleX(0.9547);transform-origin:0 50%;">Issues</div>
<div class="t" style="left:439.65px;top:12.45px;font-size:14px;line-height:14px;color:#fff;letter-spacing:-0.280px;transform:scaleX(0.9683);transform-origin:0 50%;">Boards</div>
<div class="t" style="left:512.65px;top:12.45px;font-size:14px;line-height:14px;color:#fff;letter-spacing:-0.070px;">Portfolio</div>
<div class="t" style="left:608.00px;top:12.05px;font-size:14px;line-height:14px;font-weight:bold;-webkit-text-stroke:0;color:#fff;letter-spacing:-0.099px;">Create</div>
<div class="t" style="left:951.60px;top:12.15px;font-size:14px;line-height:14px;color:#b5c0dc;letter-spacing:-0.280px;transform:scaleX(0.9846);transform-origin:0 50%;">Search</div>
<div class="t" style="left:15.45px;top:57.05px;font-size:14px;line-height:14px;color:#6b778c;letter-spacing:-0.145px;">Portfolio</div>
<div class="t" style="left:74.82px;top:57.05px;font-size:14px;line-height:14px;color:#6b778c;letter-spacing:0.000px;">/</div>
<div class="t" style="left:87.75px;top:57.05px;font-size:14px;line-height:14px;color:#6b778c;letter-spacing:-0.280px;transform:scaleX(0.9488);transform-origin:0 50%;">Plan</div>
<div class="t" style="left:1153.10px;top:57.05px;font-size:14px;line-height:14px;color:#42526e;letter-spacing:-0.280px;transform:scaleX(0.9833);transform-origin:0 50%;">Give feedback</div>
<div class="t" style="left:15.36px;top:99.50px;font-size:17.6px;line-height:17.6px;color:#172b4d;letter-spacing:0.362px;">Mobile plan</div>
<div class="t" style="left:979.70px;top:98.75px;font-size:14px;line-height:14px;color:#42526e;letter-spacing:-0.280px;transform:scaleX(0.9911);transform-origin:0 50%;">Optimize</div>
<div class="t" style="left:1058.60px;top:98.75px;font-size:14px;line-height:14px;color:#42526e;letter-spacing:-0.280px;transform:scaleX(0.9519);transform-origin:0 50%;">Share</div>
<div class="t" style="left:1119.15px;top:98.75px;font-size:14px;line-height:14px;color:#fff;letter-spacing:-0.280px;transform:scaleX(0.9637);transform-origin:0 50%;-webkit-text-stroke:0.32px currentColor;">Review changes</div>
<div class="t" style="left:1225.20px;top:100.04px;font-size:12px;line-height:12px;color:#fff;letter-spacing:0.000px;">2</div>
<div class="t" style="left:15.45px;top:144.45px;font-size:14px;line-height:14px;color:#2253c4;letter-spacing:-0.201px;-webkit-text-stroke:0.5px currentColor;">Roadmap</div>
<div class="t" style="left:90.92px;top:144.45px;font-size:14px;line-height:14px;color:#42526e;letter-spacing:-0.109px;-webkit-text-stroke:0.5px currentColor;">Teams</div>
<div class="t" style="left:146.15px;top:144.45px;font-size:14px;line-height:14px;color:#42526e;letter-spacing:-0.225px;-webkit-text-stroke:0.5px currentColor;">Releases</div>
<div class="t" style="left:15.45px;top:189.65px;font-size:14px;line-height:14px;color:#172b4d;letter-spacing:-0.280px;transform:scaleX(0.9873);transform-origin:0 50%;">Hierarchy:</div>
<div class="t" style="left:93.95px;top:189.65px;font-size:14px;line-height:14px;color:#42526e;letter-spacing:-0.280px;transform:scaleX(0.9585);transform-origin:0 50%;">Epic</div>
<div class="t" style="left:167.15px;top:189.65px;font-size:14px;line-height:14px;color:#172b4d;letter-spacing:0.350px;">to</div>
<div class="t" style="left:197.00px;top:189.65px;font-size:14px;line-height:14px;color:#42526e;letter-spacing:-0.207px;">Sub-task</div>
<div class="t" style="left:364.65px;top:189.65px;font-size:14px;line-height:14px;color:#42526e;letter-spacing:-0.280px;transform:scaleX(0.9822);transform-origin:0 50%;">Filters</div>
<div class="t" style="left:757.30px;top:189.65px;font-size:14px;line-height:14px;color:#42526e;letter-spacing:-0.280px;transform:scaleX(0.9909);transform-origin:0 50%;">3M</div>
<div class="t" style="left:798.15px;top:189.65px;font-size:14px;line-height:14px;color:#42526e;letter-spacing:-0.280px;transform:scaleX(0.8191);transform-origin:0 50%;">1Y</div>
<div class="t" style="left:835.15px;top:189.65px;font-size:14px;line-height:14px;color:#42526e;letter-spacing:-0.280px;transform:scaleX(0.9730);transform-origin:0 50%;">Fit</div>
<div class="t" style="left:872.80px;top:189.65px;font-size:14px;line-height:14px;font-weight:bold;-webkit-text-stroke:0;color:#42526e;letter-spacing:0.185px;">2018/11/08 – 2019/03/27</div>
<div class="t" style="left:1130.32px;top:189.65px;font-size:14px;line-height:14px;font-weight:bold;-webkit-text-stroke:0;color:#42526e;letter-spacing:-0.150px;transform:scaleX(0.9769);transform-origin:0 50%;">View settings</div>
<div class="t" style="left:24.30px;top:234.99px;font-size:11px;line-height:11px;font-weight:bold;-webkit-text-stroke:0;color:#5e6c84;letter-spacing:-0.150px;transform:scaleX(0.9396);transform-origin:0 50%;">SCOPE</div>
<div class="t" style="left:420.73px;top:232.79px;font-size:11px;line-height:11px;font-weight:bold;-webkit-text-stroke:0;color:#5e6c84;letter-spacing:-0.150px;transform:scaleX(0.9362);transform-origin:0 50%;">FIELDS</div>
<div class="t" style="left:780.67px;top:232.30px;font-size:13px;line-height:13px;color:#8592ad;letter-spacing:0.058px;">Nov</div>
<div class="t" style="left:861.17px;top:232.30px;font-size:13px;line-height:13px;color:#8592ad;letter-spacing:0.058px;">Dec</div>
<div class="t" style="left:969.69px;top:232.30px;font-size:13px;line-height:13px;color:#8592ad;letter-spacing:0.136px;">Jan</div>
<div class="t" style="left:1076.97px;top:232.30px;font-size:13px;line-height:13px;color:#8592ad;letter-spacing:-0.083px;">Feb</div>
<div class="t" style="left:1174.27px;top:232.30px;font-size:13px;line-height:13px;color:#8592ad;letter-spacing:0.350px;">Mar</div>
<div class="t" style="left:19.50px;top:268.95px;font-size:14px;line-height:14px;color:#5e6c84;letter-spacing:0.000px;">#</div>
<div class="t" style="left:57.15px;top:268.95px;font-size:14px;line-height:14px;color:#5e6c84;letter-spacing:-0.280px;transform:scaleX(0.9675);transform-origin:0 50%;">Issue</div>
<div class="t" style="left:324.10px;top:269.15px;font-size:14px;line-height:14px;color:#2456c6;letter-spacing:-0.280px;transform:scaleX(0.9746);transform-origin:0 50%;">Create issue</div>
<div class="t" style="left:425.90px;top:265.25px;font-size:14px;line-height:14px;color:#172b4d;letter-spacing:-0.280px;transform:scaleX(0.9946);transform-origin:0 50%;">Status breakdown</div>
<div class="t" style="left:567.80px;top:265.25px;font-size:14px;line-height:14px;color:#172b4d;letter-spacing:-0.261px;">Status</div>
<div class="t" style="left:687.92px;top:265.25px;font-size:14px;line-height:14px;color:#172b4d;letter-spacing:-0.280px;transform:scaleX(0.9672);transform-origin:0 50%;">Team</div>
<div class="t" style="left:19.45px;top:304.25px;font-size:14px;line-height:14px;color:#5e6c84;letter-spacing:0.000px;">1</div>
<div class="t" style="left:99.15px;top:304.25px;font-size:14px;line-height:14px;color:#2456c6;letter-spacing:-0.280px;transform:scaleX(0.9484);transform-origin:0 50%;">ADR-18</div>
<div class="t" style="left:157.25px;top:304.25px;font-size:14px;line-height:14px;color:#172b4d;letter-spacing:-0.139px;">Notifications</div>
<div class="t" style="left:554.04px;top:306.50px;font-size:10.4px;line-height:10.4px;font-weight:bold;-webkit-text-stroke:0;color:#1b6647;letter-spacing:-0.150px;transform:scaleX(0.9970);transform-origin:0 50%;">DONE</div>
<div class="t" style="left:640.25px;top:304.25px;font-size:14px;line-height:14px;color:#172b4d;letter-spacing:-0.280px;transform:scaleX(0.9872);transform-origin:0 50%;">Android Team</div>
<div class="t" style="left:19.80px;top:341.85px;font-size:14px;line-height:14px;color:#5e6c84;letter-spacing:0.000px;">2</div>
<div class="t" style="left:99.15px;top:341.85px;font-size:14px;line-height:14px;color:#2456c6;letter-spacing:-0.280px;transform:scaleX(0.9250);transform-origin:0 50%;">IOS-1</div>
<div class="t" style="left:144.65px;top:341.85px;font-size:14px;line-height:14px;color:#172b4d;letter-spacing:-0.280px;transform:scaleX(0.9751);transform-origin:0 50%;">App Basics - iOS</div>
<div class="t" style="left:553.84px;top:344.10px;font-size:10.4px;line-height:10.4px;font-weight:bold;-webkit-text-stroke:0;color:#172b4d;letter-spacing:-0.150px;transform:scaleX(0.9946);transform-origin:0 50%;">IN PROGRESS</div>
<div class="t" style="left:640.25px;top:341.85px;font-size:14px;line-height:14px;color:#172b4d;letter-spacing:-0.280px;transform:scaleX(0.9433);transform-origin:0 50%;">iOS Team</div>
<div class="t" style="left:19.80px;top:379.45px;font-size:14px;line-height:14px;color:#5e6c84;letter-spacing:0.000px;">3</div>
<div class="t" style="left:99.15px;top:379.45px;font-size:14px;line-height:14px;color:#2456c6;letter-spacing:-0.280px;transform:scaleX(0.9316);transform-origin:0 50%;">ADR-1</div>
<div class="t" style="left:149.15px;top:379.45px;font-size:14px;line-height:14px;color:#172b4d;letter-spacing:-0.256px;">App Basics - Android</div>
<div class="t" style="left:553.84px;top:381.70px;font-size:10.4px;line-height:10.4px;font-weight:bold;-webkit-text-stroke:0;color:#172b4d;letter-spacing:-0.150px;transform:scaleX(0.9946);transform-origin:0 50%;">IN PROGRESS</div>
<div class="t" style="left:640.25px;top:379.45px;font-size:14px;line-height:14px;color:#172b4d;letter-spacing:-0.280px;transform:scaleX(0.9872);transform-origin:0 50%;">Android Team</div>
<div class="t" style="left:19.45px;top:417.05px;font-size:14px;line-height:14px;color:#5e6c84;letter-spacing:0.000px;">4</div>
<div class="t" style="left:99.15px;top:417.05px;font-size:14px;line-height:14px;color:#2456c6;letter-spacing:-0.280px;transform:scaleX(0.9854);transform-origin:0 50%;">ADR-8</div>
<div class="t" style="left:151.45px;top:417.05px;font-size:14px;line-height:14px;color:#172b4d;letter-spacing:-0.280px;transform:scaleX(0.9798);transform-origin:0 50%;">Invite and share</div>
<div class="t" style="left:553.84px;top:419.30px;font-size:10.4px;line-height:10.4px;font-weight:bold;-webkit-text-stroke:0;color:#172b4d;letter-spacing:-0.150px;transform:scaleX(0.9946);transform-origin:0 50%;">IN PROGRESS</div>
<div class="t" style="left:640.25px;top:417.05px;font-size:14px;line-height:14px;color:#172b4d;letter-spacing:-0.280px;transform:scaleX(0.9872);transform-origin:0 50%;">Android Team</div>
<div class="t" style="left:19.45px;top:454.65px;font-size:14px;line-height:14px;color:#5e6c84;letter-spacing:0.000px;">5</div>
<div class="t" style="left:99.15px;top:454.65px;font-size:14px;line-height:14px;color:#2456c6;letter-spacing:-0.245px;">IOS-9</div>
<div class="t" style="left:147.42px;top:454.65px;font-size:14px;line-height:14px;color:#172b4d;letter-spacing:-0.280px;transform:scaleX(0.9792);transform-origin:0 50%;">Trip management</div>
<div class="t" style="left:554.41px;top:456.90px;font-size:10.4px;line-height:10.4px;font-weight:bold;-webkit-text-stroke:0;color:#17459f;letter-spacing:-0.106px;">TO DO</div>
<div class="t" style="left:640.25px;top:454.65px;font-size:14px;line-height:14px;color:#172b4d;letter-spacing:-0.280px;transform:scaleX(0.9433);transform-origin:0 50%;">iOS Team</div>
<div class="t" style="left:19.80px;top:492.25px;font-size:14px;line-height:14px;color:#5e6c84;letter-spacing:0.000px;">6</div>
<div class="t" style="left:99.15px;top:492.25px;font-size:14px;line-height:14px;color:#2456c6;letter-spacing:-0.252px;">IOS-20</div>
<div class="t" style="left:154.50px;top:492.25px;font-size:14px;line-height:14px;color:#172b4d;letter-spacing:-0.280px;transform:scaleX(0.9873);transform-origin:0 50%;">Group booking experience</div>
<div class="t" style="left:554.41px;top:494.50px;font-size:10.4px;line-height:10.4px;font-weight:bold;-webkit-text-stroke:0;color:#17459f;letter-spacing:-0.106px;">TO DO</div>
<div class="t" style="left:640.25px;top:492.25px;font-size:14px;line-height:14px;color:#172b4d;letter-spacing:-0.280px;transform:scaleX(0.9433);transform-origin:0 50%;">iOS Team</div>
<div class="t" style="left:19.45px;top:529.85px;font-size:14px;line-height:14px;color:#5e6c84;letter-spacing:0.000px;">7</div>
<div class="t" style="left:99.15px;top:529.85px;font-size:14px;line-height:14px;color:#2456c6;letter-spacing:-0.280px;transform:scaleX(0.9427);transform-origin:0 50%;">IOS-21</div>
<div class="t" style="left:152.92px;top:529.85px;font-size:14px;line-height:14px;color:#172b4d;letter-spacing:-0.280px;transform:scaleX(0.9907);transform-origin:0 50%;">Team invitations</div>
<div class="t" style="left:554.41px;top:532.10px;font-size:10.4px;line-height:10.4px;font-weight:bold;-webkit-text-stroke:0;color:#17459f;letter-spacing:-0.106px;">TO DO</div>
<div class="t" style="left:640.25px;top:529.85px;font-size:14px;line-height:14px;color:#172b4d;letter-spacing:-0.280px;transform:scaleX(0.9433);transform-origin:0 50%;">iOS Team</div>
<div class="t" style="left:19.80px;top:567.45px;font-size:14px;line-height:14px;color:#5e6c84;letter-spacing:0.000px;">8</div>
<div class="t" style="left:99.15px;top:567.45px;font-size:14px;line-height:14px;color:#2456c6;letter-spacing:-0.280px;transform:scaleX(0.9916);transform-origin:0 50%;">IOS-22</div>
<div class="t" style="left:154.00px;top:567.45px;font-size:14px;line-height:14px;color:#172b4d;letter-spacing:-0.280px;transform:scaleX(0.9933);transform-origin:0 50%;">Social media integrations</div>
<div class="t" style="left:554.41px;top:569.70px;font-size:10.4px;line-height:10.4px;font-weight:bold;-webkit-text-stroke:0;color:#17459f;letter-spacing:-0.106px;">TO DO</div>
<div class="t" style="left:640.25px;top:567.45px;font-size:14px;line-height:14px;color:#172b4d;letter-spacing:-0.280px;transform:scaleX(0.9433);transform-origin:0 50%;">iOS Team</div>
<div class="t" style="left:19.80px;top:605.05px;font-size:14px;line-height:14px;color:#5e6c84;letter-spacing:0.000px;">9</div>
<div class="t" style="left:99.15px;top:605.05px;font-size:14px;line-height:14px;color:#2456c6;letter-spacing:-0.280px;transform:scaleX(0.9298);transform-origin:0 50%;">ADR-17</div>
<div class="t" style="left:156.40px;top:605.05px;font-size:14px;line-height:14px;color:#172b4d;letter-spacing:-0.262px;">Collaborative Trip booking flow</div>
<div class="t" style="left:554.41px;top:607.30px;font-size:10.4px;line-height:10.4px;font-weight:bold;-webkit-text-stroke:0;color:#17459f;letter-spacing:-0.106px;">TO DO</div>
<div class="t" style="left:640.25px;top:605.05px;font-size:14px;line-height:14px;color:#172b4d;letter-spacing:-0.280px;transform:scaleX(0.9872);transform-origin:0 50%;">Android Team</div>
<div class="t" style="left:19.45px;top:642.65px;font-size:14px;line-height:14px;color:#5e6c84;letter-spacing:-0.280px;transform:scaleX(0.9150);transform-origin:0 50%;">10</div>
<div class="t" style="left:99.15px;top:642.65px;font-size:14px;line-height:14px;color:#2456c6;letter-spacing:-0.280px;transform:scaleX(0.9546);transform-origin:0 50%;">ADR-19</div>
<div class="t" style="left:157.25px;top:642.65px;font-size:14px;line-height:14px;color:#172b4d;letter-spacing:-0.280px;transform:scaleX(0.9969);transform-origin:0 50%;">Adapt apps to new payment methods</div>
<div class="t" style="left:554.41px;top:644.90px;font-size:10.4px;line-height:10.4px;font-weight:bold;-webkit-text-stroke:0;color:#17459f;letter-spacing:-0.106px;">TO DO</div>
<div class="t" style="left:640.25px;top:642.65px;font-size:14px;line-height:14px;color:#172b4d;letter-spacing:-0.280px;transform:scaleX(0.9872);transform-origin:0 50%;">Android Team</div>
<div class="t" style="left:19.45px;top:680.25px;font-size:14px;line-height:14px;color:#5e6c84;letter-spacing:-0.280px;transform:scaleX(0.8410);transform-origin:0 50%;">11</div>
<div class="t" style="left:99.15px;top:680.25px;font-size:14px;line-height:14px;color:#2456c6;letter-spacing:-0.280px;transform:scaleX(0.9856);transform-origin:0 50%;">ADR-23</div>
<div class="t" style="left:159.10px;top:680.25px;font-size:14px;line-height:14px;color:#172b4d;letter-spacing:-0.185px;">Search algorithm - proof of concept</div>
<div class="t" style="left:554.41px;top:682.50px;font-size:10.4px;line-height:10.4px;font-weight:bold;-webkit-text-stroke:0;color:#17459f;letter-spacing:-0.106px;">TO DO</div>
<div class="t" style="left:640.25px;top:680.25px;font-size:14px;line-height:14px;color:#172b4d;letter-spacing:-0.280px;transform:scaleX(0.9872);transform-origin:0 50%;">Android Team</div>
<div class="t" style="left:19.50px;top:717.75px;font-size:14px;line-height:14px;font-weight:bold;-webkit-text-stroke:0;color:#6b778c;letter-spacing:-0.150px;transform:scaleX(0.9876);transform-origin:0 50%;">2 issues without parent</div>
<div class="t" style="left:834.25px;top:306.75px;width:18px;text-align:center;font-size:12px;line-height:12px;font-weight:bold;-webkit-text-stroke:0;color:#fff">2</div>
<div class="t" style="left:979.30px;top:381.95px;width:18px;text-align:center;font-size:12px;line-height:12px;font-weight:bold;-webkit-text-stroke:0;color:#fff">1</div>
<div class="t" style="left:944.00px;top:607.55px;width:18px;text-align:center;font-size:12px;line-height:12px;font-weight:bold;-webkit-text-stroke:0;color:#fff">1</div>
<div class="t" style="left:993.00px;top:645.15px;width:18px;text-align:center;font-size:12px;line-height:12px;font-weight:bold;-webkit-text-stroke:0;color:#fff">1</div>
<div class="t" style="left:1090.80px;top:682.75px;width:18px;text-align:center;font-size:12px;line-height:12px;font-weight:bold;-webkit-text-stroke:0;color:#fff">1</div>
</div>
</body>
</html>
